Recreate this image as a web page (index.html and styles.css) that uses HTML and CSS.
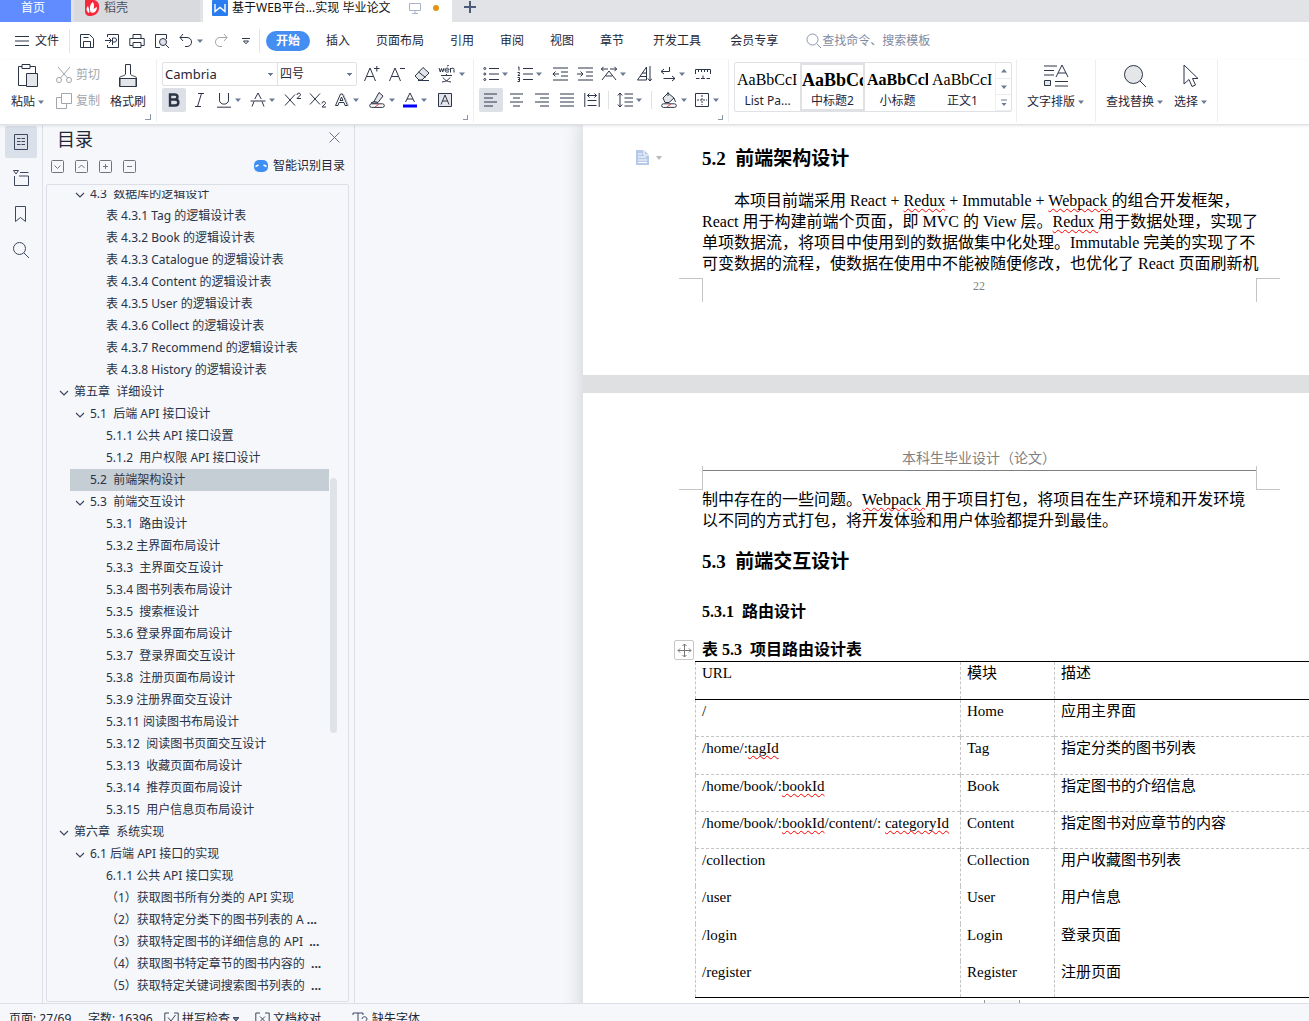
FILE: index.html
```html
<!DOCTYPE html>
<html lang="zh-CN">
<head>
<meta charset="utf-8">
<title>基于WEB平台…实现 毕业论文</title>
<link rel="stylesheet" href="styles.css">
</head>
<body>
<svg class="defs" width="0" height="0" aria-hidden="true">
  <symbol id="caret" viewBox="0 0 6 4"><path d="M0 0.500h6L3 4z" fill="#6b7a96"/></symbol>
  <symbol id="chev" viewBox="0 0 10 6"><path d="M1 1l4 4 4-4" fill="none" stroke="#3c465c" stroke-width="1.200"/></symbol>
</svg>

<header class="tabs">
  <button class="tab home">首页</button>
  <button class="tab docer">
    <svg width="16" height="16" viewBox="0 0 16 16"><path d="M1 0h9a6 6 0 0 1 5 7a8 8 0 0 1-8 9H5a5 5 0 0 1-4-5z" fill="#f5293b"/><path d="M5 13c-3-2-3-5-1-7 1 3 2 5 1 7zM7 13C5 8 6 4 9 2c2 4 1 8-2 11zM8 13c0-3 2-5 5-6 0 3-2 6-5 6z" fill="#fff"/></svg>
    稻壳</button>
  <button class="tab active">
    <svg width="16" height="16" viewBox="0 0 16 16"><rect width="16" height="16" rx="1" fill="#2a7df0"/><path d="M3 4v7.500l5-4 5 4V4" fill="none" stroke="#fff" stroke-width="1.400"/></svg>
    <span class="tab-name">基于WEB平台...实现 毕业论文</span>
    <svg width="12" height="12" viewBox="0 0 12 12" fill="none" stroke="#a9b4c8"><path d="M.5 1.500h11v7H.5zM6 8.500v3M3 11.500h6"/></svg>
    <i class="dot"></i>
  </button>
  <button class="newtab" aria-label="新建"><svg width="12" height="12" viewBox="0 0 12 12"><path d="M6 0v12M0 6h12" stroke="#4a5a78" stroke-width="2"/></svg></button>
</header>

<nav class="menu">
  <button class="file"><svg width="16" height="12" viewBox="0 0 16 12" stroke="#2c3448"><path d="M1 1.500h14M1 6h14M1 10.500h14"/></svg>文件</button>
  <i class="vline"></i>
  <div class="quick">
    <button class="t" aria-label="保存"><svg width="16" height="16" viewBox="0 0 16 16"><path d="M1.500 1.500h9l4 4v9h-13zM4.500 14.500v-6h7v6M4.500 4.500h5"/></svg></button>
    <button class="t" aria-label="输出为PDF"><svg width="16" height="16" viewBox="0 0 16 16"><path d="M3.500 4V1.500h11v13h-11V12M1 7.500h6M5 5l2.500 2.500L5 10M8.500 12V5h2.500c2 0 2 4 0 4H8.500"/></svg></button>
    <button class="t" aria-label="打印"><svg width="16" height="16" viewBox="0 0 16 16"><path d="M4 5.500v-4h8v4M4 12.500H.8v-7h14.400v7H12M4 9.500h8v5H4z"/></svg></button>
    <button class="t" aria-label="打印预览"><svg width="16" height="16" viewBox="0 0 16 16"><path d="M6 14.500H1.500v-13h11V6"/><circle cx="9" cy="9" r="3.500" fill="#dfe2e8"/><path d="M11.500 11.500l3.500 3.500"/></svg></button>
    <button class="t c" aria-label="撤销"><svg width="16" height="16" viewBox="0 0 16 16"><path d="M5 1L2 4.500 5 8M2 4.500h7c6 0 6 9 0 9H7"/></svg><svg class="car"><use href="#caret"/></svg></button>
    <button class="t off" aria-label="恢复"><svg width="16" height="16" viewBox="0 0 16 16"><path d="M11 1l3 3.500L11 8M14 4.500H7c-6 0-6 9 0 9h2"/></svg></button>
    <button class="t" aria-label="更多"><svg width="8" height="8" viewBox="0 0 8 8"><path d="M0 1.500h8M1.500 4h5L4 6.800z"/></svg></button>
  </div>
  <i class="vline"></i>
  <div class="menus">
    <button class="pill">开始</button><button>插入</button><button>页面布局</button><button>引用</button><button>审阅</button><button>视图</button><button>章节</button>
    <div class="menus wide"><button>开发工具</button><button>会员专享</button></div>
  </div>
  <label class="search"><svg width="16" height="16" viewBox="0 0 16 16" fill="none" stroke="#8a97ae"><circle cx="6.500" cy="6.500" r="5.500"/><path d="M10.500 10.500l4.500 4.500"/></svg><input type="text" placeholder="查找命令、搜索模板" aria-label="查找命令、搜索模板"></label>
</nav>

<section class="ribbon">
  <div class="group clip">
    <button class="big"><svg width="24" height="26" viewBox="0 0 24 26"><path d="M6 3.500H2.500v19H10M14 3.500h5.500V10M6 1.500h8v4H6z"/><path d="M10.500 10.500h11v13h-11z" fill="#e4e6ea"/></svg><span>粘贴<svg class="car"><use href="#caret"/></svg></span></button>
    <div class="stack">
      <button class="off"><svg width="16" height="16" viewBox="0 0 16 16"><circle cx="3" cy="13" r="2.500"/><circle cx="13" cy="13" r="2.500"/><path d="M2 0l9.500 11M14 0L4.500 11"/></svg>剪切</button>
      <button class="off"><svg width="16" height="16" viewBox="0 0 16 16"><path d="M5.500.5h10v10h-10zM5.500 4.500h-5v11h10v-5"/></svg>复制</button>
    </div>
    <button class="big"><svg width="24" height="26" viewBox="0 0 24 26"><path d="M4 15.500h16v8H4z" fill="#e4e6ea"/><path d="M3.500 23.500V15c0-2 6-2 6-4V1.500h5V11c0 2 6 2 6 4v8.500z"/></svg><span>格式刷</span></button>
  </div>
  <div class="group font">
    <div class="row">
      <div class="selects"><select class="s1" aria-label="字体"><option>Cambria</option></select><select class="s2" aria-label="字号"><option>四号</option></select></div>
      <button class="t" aria-label="增大字号"><svg width="16" height="16" viewBox="0 0 16 16"><path d="M.5 15L6 2l5.500 13M2.500 10.500h7M10 2.500h5.500M12.800 0v5.500"/></svg></button>
      <button class="t" aria-label="减小字号"><svg width="16" height="16" viewBox="0 0 16 16"><path d="M.5 15L6 2l5.500 13M2.500 10.500h7M11 2.500h5"/></svg></button>
      <button class="t" aria-label="清除格式"><svg width="16" height="16" viewBox="0 0 16 16"><path d="M9 1.500L15 7l-7 7H5L1 10z" fill="#e4e6ea"/><path d="M4.500 6l7 5.500M4 14.500h11"/></svg></button>
      <button class="t c" aria-label="拼音"><svg width="18" height="18" viewBox="0 0 18 18"><path d="M1 3l1.300 4L3.500 3.500 4.700 7 6 3M7 5h4c0-2.500-4-2.500-4 0s2.500 2.500 4 1.500M9 1l2-1M12.500 7.500V3M12.500 4c2-1.500 3.500-1 3.500.5v3M3 10.500h11M8.500 9v1.500M5 12.500c2 3 4 4 8 4.500M12 12.500c-2 3-4 4-8 4.500"/></svg><svg class="car"><use href="#caret"/></svg></button>
    </div>
    <div class="row">
      <button class="t on" aria-label="加粗"><svg width="16" height="16" viewBox="0 0 16 16"><path d="M4 2.500h4.500c4 0 4 5 0 5H4zM4 7.500h5c4.500 0 4.500 6 0 6H4z" stroke-width="2.400"/></svg></button>
      <button class="t" aria-label="倾斜"><svg width="16" height="16" viewBox="0 0 16 16"><path d="M6 1.500h6M3 14.500h6M9.500 1.500l-4 13"/></svg></button>
      <button class="t c" aria-label="下划线"><svg width="16" height="16" viewBox="0 0 16 16"><path d="M3.500 1v7c0 5.500 9 5.500 9 0V1M1 15.200h14" /></svg><svg class="car"><use href="#caret"/></svg></button>
      <button class="t c" aria-label="删除线"><svg width="16" height="16" viewBox="0 0 16 16"><path d="M2 14.500l2-5M14 14.500l-2-5M4.800 7L8 1l3.200 6M.5 9h15"/></svg><svg class="car"><use href="#caret"/></svg></button>
      <button class="t" aria-label="上标"><svg width="18" height="16" viewBox="0 0 18 16"><path d="M1 2.500l10 11M11 2.500l-10 11M13 3c0-3 4-2 3.500 0L13 6.500h4"/></svg></button>
      <button class="t" aria-label="下标"><svg width="18" height="16" viewBox="0 0 18 16"><path d="M1 1.500l10 11M11 1.500l-10 11M13 11.500c0-3 4-2 3.500 0L13 15h4"/></svg></button>
      <button class="t c" aria-label="文字效果"><svg width="16" height="16" viewBox="0 0 16 16"><path d="M1.500 13.500L6.500 2h2l5 11.500H11L10 10.500H5L4 13.500zM6 8.500h3L7.500 5z"/><path d="M9.500 2l5 11.500" stroke="#b9bec8"/></svg><svg class="car"><use href="#caret"/></svg></button>
      <button class="t c" aria-label="突出显示"><svg width="18" height="16" viewBox="0 0 18 16"><path d="M11 .5l4 3.500-5 6.500-4-1z" fill="#e4e6ea"/><path d="M6 9.500L3 11h6.500M3.500 11.800h11a1.800 1.800 0 0 1 0 3.600h-11a1.800 1.800 0 0 1 0-3.600z"/><path d="M7 15l4-3" stroke="#e04040"/></svg><svg class="car"><use href="#caret"/></svg></button>
      <button class="t c" aria-label="字体颜色"><svg width="16" height="16" viewBox="0 0 16 16"><path d="M3.500 10L8 1l4.500 9M5 7h6"/><path d="M1 14h14" stroke="#00f" stroke-width="3"/></svg><svg class="car"><use href="#caret"/></svg></button>
      <button class="t" aria-label="字符底纹"><svg width="16" height="16" viewBox="0 0 16 16"><path d="M1.500 1.500h13v13h-13z" fill="#e4e6ea"/><path d="M4 12.500L8 3l4 9.500M5.500 9h5"/></svg></button>
    </div>
    <i class="launch"></i>
  </div>
  <div class="group para">
    <div class="row">
      <button class="t c" aria-label="项目符号"><svg width="16" height="16" viewBox="0 0 16 16"><path d="M6 2.500h10M6 8h10M6 13.500h10"/><circle cx="1.800" cy="2.500" r="1"/><circle cx="1.800" cy="8" r="1"/><circle cx="1.800" cy="13.500" r="1"/></svg><svg class="car"><use href="#caret"/></svg></button>
      <button class="t c" aria-label="编号"><svg width="16" height="16" viewBox="0 0 16 16"><path d="M6 2.500h10M6 8h10M6 13.500h10M1 1h1v3.500M.5 6.500H2.500v1.200L1 9.500h2M.5 11.500h2v4h-2M1 13.500h1.500"/></svg><svg class="car"><use href="#caret"/></svg></button>
      <button class="t" aria-label="减少缩进"><svg width="16" height="16" viewBox="0 0 16 16"><path d="M1 2h15M9 6h7M9 10h7M1 14h15M.8 8H7M3.500 5.500L1 8l2.500 2.500"/></svg></button>
      <button class="t" aria-label="增加缩进"><svg width="16" height="16" viewBox="0 0 16 16"><path d="M1 2h15M9 6h7M9 10h7M1 14h15M0 8h6M3.500 5.500L6 8l-2.500 2.500"/></svg></button>
      <button class="t c" aria-label="中文版式"><svg width="16" height="16" viewBox="0 0 16 16"><path d="M1 14L8 5l7 9M5 10h6M0 3h7M2.500.8L.5 3l2 2.200M9 3h7M13.500.8l2 2.200-2 2.200"/></svg><svg class="car"><use href="#caret"/></svg></button>
      <button class="t" aria-label="排序"><svg width="16" height="16" viewBox="0 0 16 16"><path d="M10.500 1v13h-9zM10.500 7H6M10.500 10.500H4M14 0v15M11.800 12.500L14 15l2-2.500"/></svg></button>
      <button class="t c" aria-label="显示标记"><svg width="16" height="16" viewBox="0 0 16 16"><path d="M9.500 1v4.500H1.500M4 3L1 5.500 4 8M3.500 12.500H15M12 10l3 2.500-3 2.500"/></svg><svg class="car"><use href="#caret"/></svg></button>
      <button class="t" aria-label="制表位"><svg width="18" height="16" viewBox="0 0 18 16"><path d="M1.500 8V3.500h15V8M4.500 3.500V6M7.500 3.500V6M10.500 3.500V6M13.500 3.500V6M2 12.500h3.500M12.500 12.500H16M7 12.500h4M9 9.500v3"/></svg></button>
    </div>
    <div class="row">
      <button class="t on" aria-label="左对齐"><svg width="16" height="16" viewBox="0 0 16 16"><path d="M1 2h13M1 6h9M1 10h13M1 14h9"/></svg></button>
      <button class="t" aria-label="居中"><svg width="16" height="16" viewBox="0 0 16 16"><path d="M1 2h13M4 6h7M1 10h13M4 14h7"/></svg></button>
      <button class="t" aria-label="右对齐"><svg width="16" height="16" viewBox="0 0 16 16"><path d="M1 2h14M6 6h9M1 10h14M6 14h9"/></svg></button>
      <button class="t" aria-label="两端对齐"><svg width="16" height="16" viewBox="0 0 16 16"><path d="M1 2h14M1 6h14M1 10h14M1 14h14"/></svg></button>
      <button class="t" aria-label="分散对齐"><svg width="16" height="16" viewBox="0 0 16 16"><path d="M.8 1v14M15.200 1v14M3.500 8.500h9M3.500 13.500h9M3.500 3.500h9M5.500 1.500l-2 2 2 2M10.500 1.500l2 2-2 2"/></svg></button>
      <i class="sep"></i>
      <button class="t c" aria-label="行距"><svg width="16" height="16" viewBox="0 0 16 16"><path d="M7.500 2H16M7.500 6H16M7.500 10H16M7.500 14H16M3 1v14M.8 3.500L3 1l2.200 2.500M.8 12.500L3 15l2.200-2.500"/></svg><svg class="car"><use href="#caret"/></svg></button>
      <i class="sep"></i>
      <button class="t c" aria-label="底纹颜色"><svg width="18" height="16" viewBox="0 0 18 16"><path d="M8 1l6 5-5 4.500H5L3 6z" fill="#e4e6ea"/><path d="M8 0v4M14 6l1.500 4M3.500 11.800h11a1.800 1.800 0 0 1 0 3.600h-11a1.800 1.800 0 0 1 0-3.600z"/><path d="M7 15l4-3" stroke="#e04040"/></svg><svg class="car"><use href="#caret"/></svg></button>
      <button class="t c" aria-label="边框"><svg width="16" height="16" viewBox="0 0 16 16"><path d="M1.500 1.500h13v13h-13z"/><path d="M8 3v10M3 8h10" stroke-dasharray="2 1"/></svg><svg class="car"><use href="#caret"/></svg></button>
    </div>
    <i class="launch"></i>
  </div>
  <div class="group gal">
    <div class="gallery">
      <button class="style"><b class="n">AaBbCcI</b><span>List Pa...</span></button>
      <button class="style sel"><b class="h">AaBbCc</b><span>中标题2</span></button>
      <button class="style"><b>AaBbCcl</b><span>小标题</span></button>
      <button class="style"><b class="n">AaBbCcI</b><span>正文1</span></button>
      <div class="spin">
        <button aria-label="上"><svg class="car up"><use href="#caret"/></svg></button>
        <button aria-label="下"><svg class="car"><use href="#caret"/></svg></button>
        <button aria-label="展开"><svg width="6" height="8" viewBox="0 0 6 8"><path d="M0 1h6" stroke="#6b7a96"/><path d="M.5 4h5L3 7z" fill="#6b7a96" stroke="none"/></svg></button>
      </div>
    </div>
  </div>
  <div class="group lay">
    <button class="big"><svg width="26" height="26" viewBox="0 0 26 26"><path d="M1 3h13M1 7.500h10M1 12h10M13 14l6-12 6 12M15 10h8M12 18.500h13M12 23h13"/><path d="M1.500 17.500h6v5h-6z" fill="#e4e6ea"/></svg><span>文字排版<svg class="car"><use href="#caret"/></svg></span></button>
  </div>
  <div class="group find">
    <button class="big"><svg width="26" height="26" viewBox="0 0 26 26"><circle cx="11.500" cy="11.500" r="9" fill="#e4e6ea"/><path d="M18 18l6 6"/></svg><span>查找替换<svg class="car"><use href="#caret"/></svg></span></button>
    <button class="big"><svg width="26" height="26" viewBox="0 0 26 26"><path d="M6 2v19l5-4.500 3 7 3.500-1.500-3-6.500H20z" fill="#fff"/></svg><span>选择<svg class="car"><use href="#caret"/></svg></span></button>
  </div>
</section>

<main>
  <aside class="rail">
    <button class="on" aria-label="目录"><svg width="18" height="18" viewBox="0 0 18 18"><path d="M2.500 1.500h13v15h-13zM5 5.500h3.500M9.500 5.500H13M5 8.500h3.500M9.500 8.500H13M5 11.500h3.500M9.500 11.500H13"/></svg></button>
    <button aria-label="章节"><svg width="18" height="18" viewBox="0 0 18 18"><path d="M2.500 7v9.500h14V7H7M8 3.500h8.500M1.500 1.500h5L4 5z"/></svg></button>
    <button aria-label="书签"><svg width="18" height="18" viewBox="0 0 18 18"><path d="M3.500 1.500h10v15l-5-4-5 4z"/></svg></button>
    <button aria-label="查找"><svg width="18" height="18" viewBox="0 0 18 18"><circle cx="7.500" cy="7.500" r="6"/><path d="M12 12l5 5"/></svg></button>
  </aside>
  <aside class="panel">
    <div class="phead"><h1>目录</h1><button aria-label="关闭"><svg width="11" height="11" viewBox="0 0 11 11" stroke="#6b7487"><path d="M.5.5l10 10M10.500.5l-10 10"/></svg></button></div>
    <div class="ptools">
      <button aria-label="全部展开"><svg width="13" height="13" viewBox="0 0 13 13"><rect x=".5" y=".5" width="12" height="12" rx="1"/><path d="M3.500 5.500l3 3 3-3"/></svg></button>
      <button aria-label="全部收起"><svg width="13" height="13" viewBox="0 0 13 13"><rect x=".5" y=".5" width="12" height="12" rx="1"/><path d="M3.500 8l3-3 3 3"/></svg></button>
      <button aria-label="升级"><svg width="13" height="13" viewBox="0 0 13 13"><rect x=".5" y=".5" width="12" height="12" rx="1"/><path d="M4 6.500h5M6.500 4v5"/></svg></button>
      <button aria-label="降级"><svg width="13" height="13" viewBox="0 0 13 13"><rect x=".5" y=".5" width="12" height="12" rx="1"/><path d="M4 6.500h5"/></svg></button>
      <button class="smart"><svg width="14" height="12" viewBox="0 0 14 12"><rect width="14" height="12" rx="5" fill="#3f8ef5" stroke="none"/><path d="M1.500 6.500l3-1.500M9.500 5l3 1.500" stroke="#fff" stroke-width="1.400"/></svg>智能识别目录</button>
    </div>
    <div class="tree">
      <ul>
        <li class="l2"><svg class="ch"><use href="#chev"/></svg>4.3  数据库的逻辑设计</li>
        <li class="l3">表 4.3.1 Tag 的逻辑设计表</li>
        <li class="l3">表 4.3.2 Book 的逻辑设计表</li>
        <li class="l3">表 4.3.3 Catalogue 的逻辑设计表</li>
        <li class="l3">表 4.3.4 Content 的逻辑设计表</li>
        <li class="l3">表 4.3.5 User 的逻辑设计表</li>
        <li class="l3">表 4.3.6 Collect 的逻辑设计表</li>
        <li class="l3">表 4.3.7 Recommend 的逻辑设计表</li>
        <li class="l3">表 4.3.8 History 的逻辑设计表</li>
        <li class="l1"><svg class="ch"><use href="#chev"/></svg>第五章  详细设计</li>
        <li class="l2"><svg class="ch"><use href="#chev"/></svg>5.1  后端 API 接口设计</li>
        <li class="l3">5.1.1 公共 API 接口设置</li>
        <li class="l3">5.1.2  用户权限 API 接口设计</li>
        <li class="l2 cur">5.2  前端架构设计</li>
        <li class="l2"><svg class="ch"><use href="#chev"/></svg>5.3  前端交互设计</li>
        <li class="l3">5.3.1  路由设计</li>
        <li class="l3">5.3.2 主界面布局设计</li>
        <li class="l3">5.3.3  主界面交互设计</li>
        <li class="l3">5.3.4 图书列表布局设计</li>
        <li class="l3">5.3.5  搜索框设计</li>
        <li class="l3">5.3.6 登录界面布局设计</li>
        <li class="l3">5.3.7  登录界面交互设计</li>
        <li class="l3">5.3.8  注册页面布局设计</li>
        <li class="l3">5.3.9 注册界面交互设计</li>
        <li class="l3">5.3.11 阅读图书布局设计</li>
        <li class="l3">5.3.12  阅读图书页面交互设计</li>
        <li class="l3">5.3.13  收藏页面布局设计</li>
        <li class="l3">5.3.14  推荐页面布局设计</li>
        <li class="l3">5.3.15  用户信息页布局设计</li>
        <li class="l1"><svg class="ch"><use href="#chev"/></svg>第六章  系统实现</li>
        <li class="l2"><svg class="ch"><use href="#chev"/></svg>6.1 后端 API 接口的实现</li>
        <li class="l3">6.1.1 公共 API 接口实现</li>
        <li class="l3">（1）获取图书所有分类的 API 实现</li>
        <li class="l3">（2）获取特定分类下的图书列表的 A <b>...</b></li>
        <li class="l3">（3）获取特定图书的详细信息的 API  <b>...</b></li>
        <li class="l3">（4）获取图书特定章节的图书内容的  <b>...</b></li>
        <li class="l3">（5）获取特定关键词搜索图书列表的  <b>...</b></li>
      </ul>
      <i class="thumb"></i>
    </div>
  </aside>
  <div class="doc">
    <div class="sheets">
    <article class="page first">
      <i class="crop bl"></i><i class="crop br"></i>
      <span class="para-tool"><svg width="13" height="15" viewBox="0 0 13 15"><path d="M0 0h8l5 5v10H0z" fill="#b6c9e8"/><path d="M8 0v5h5M2 4h4M2 7h8M2 10h9M2 12.500h9" stroke="#fff" fill="none"/></svg><svg width="6" height="4" viewBox="0 0 6 4"><path d="M0 0h6L3 4z" fill="#b5b8be"/></svg></span>
      <h2>5.2  前端架构设计</h2>
      <div class="text">
        <p class="ind">本项目前端采用 React + <u>Redux</u> + Immutable + <u>Webpack </u>的组合开发框架，</p>
        <p>React 用于构建前端个页面，即 MVC 的 View 层。<u>Redux </u>用于数据处理，实现了</p>
        <p>单项数据流，将项目中使用到的数据做集中化处理。Immutable 完美的实现了不</p>
        <p>可变数据的流程，使数据在使用中不能被随便修改，也优化了 React 页面刷新机</p>
      </div>
      <div class="pageno">22</div>
    </article>
    <article class="page second">
      <i class="crop tl"></i><i class="crop tr"></i>
      <div class="runhead">本科生毕业设计（论文）</div>
      <div class="text">
        <p>制中存在的一些问题。<u>Webpack </u>用于项目打包，将项目在生产环境和开发环境</p>
        <p>以不同的方式打包，将开发体验和用户体验都提升到最佳。</p>
      </div>
      <h2>5.3  前端交互设计</h2>
      <h3>5.3.1  路由设计</h3>
      <div class="tablebox">
        <button class="move" aria-label="移动表格"><svg width="15" height="15" viewBox="0 0 15 15" fill="none" stroke="#777"><path d="M7.500 1v13M1 7.500h13M5.500 3l2-2 2 2M5.500 12l2 2 2-2M3 5.500l-2 2 2 2M12 5.500l2 2-2 2"/></svg></button>
        <table>
          <caption>表 5.3  项目路由设计表</caption>
          <thead><tr><th class="c1">URL</th><th class="c2">模块</th><th>描述</th></tr></thead>
          <tbody>
            <tr><td>/</td><td>Home</td><td>应用主界面</td></tr>
            <tr><td>/home/:<u>tagId</u></td><td>Tag</td><td>指定分类的图书列表</td></tr>
            <tr><td>/home/book/:<u>bookId</u></td><td>Book</td><td>指定图书的介绍信息</td></tr>
            <tr><td>/home/book/:<u>bookId</u>/content/: <u>categoryId</u></td><td>Content</td><td>指定图书对应章节的内容</td></tr>
            <tr><td>/collection</td><td>Collection</td><td>用户收藏图书列表</td></tr>
            <tr><td>/user</td><td>User</td><td>用户信息</td></tr>
            <tr><td>/login</td><td>Login</td><td>登录页面</td></tr>
            <tr><td>/register</td><td>Register</td><td>注册页面</td></tr>
          </tbody>
        </table>
        <i class="addrow"></i>
      </div>
    </article>
    </div>
  </div>
</main>

<footer class="status">
  <span class="w1">页面: 27/69</span><span class="w2">字数: 16396</span>
  <button class="w3"><svg width="15" height="15" viewBox="0 0 15 15"><path d="M5 1H.8v13.200h13.400V1H10M4 5.500L7 9l4.500-6"/></svg>拼写检查<svg class="car"><use href="#caret"/></svg></button>
  <button class="w4"><svg width="15" height="15" viewBox="0 0 15 15"><path d="M5 1H.8v13.200h13.400V1H10M5 4.500l5 5M10 4.500l-5 5"/></svg>文档校对</button>
  <button class="w5"><svg width="17" height="15" viewBox="0 0 17 15"><path d="M1 3V1h10v2M6 1v13M4 14h4M10 7c0-3 5-3 5 0 0 2-2.500 2-2.500 4M12.500 13v1"/></svg>缺失字体</button>
</footer>
</body>
</html>
```
FILE: styles.css
```css
* { box-sizing: border-box; }
body {
  margin: 0;
  height: 100vh;
  display: flex;
  flex-direction: column;
  overflow: hidden;
  background: #f5f7fa;
  color: #1f2636;
  font: 12px/16px "Noto Sans", "Noto Sans CJK SC", sans-serif;
}
button, input, select { font: inherit; color: inherit; border: 0; padding: 0; margin: 0; background: none; }
button { white-space: nowrap; }
svg { flex: none; }
.defs { position: absolute; }
.car { width: 6px; height: 4px; }
.up { transform: rotate(180deg); }

/* document tabs */
.tabs { flex: none; display: flex; height: 22px; background: #e2e3e7; }
.tab { display: flex; align-items: center; height: 22px; padding-bottom: 7px; }
.home { width: 71px; justify-content: center; padding-right: 5px; background: #618cff; color: #fff; margin-right: 3px; }
.docer { width: 126px; gap: 4px; padding-left: 10px; background: #d9dade; color: #4b5162; margin-right: 3px; }
.active { width: 249px; gap: 4px; padding-left: 9px; background: #fff; color: #111; }
.active .tab-name { margin-right: 15px; }
.dot { width: 6px; height: 6px; margin-left: 8px; border-radius: 3px; background: #e2960f; }
.newtab { display: flex; align-items: center; padding: 0 0 8px 12px; height: 22px; }

/* menu line */
.menu { flex: none; display: flex; align-items: center; height: 38px; background: #fff; }
.menu svg { fill: none; stroke: #2c3448; }
.file { display: flex; align-items: center; gap: 5px; margin: 0 10px 0 14px; }
.vline { width: 1px; height: 24px; background: #e3e5e9; }
.quick { display: flex; margin: 0 1px 0 4px; }
.t { display: flex; align-items: center; justify-content: center; width: 25px; height: 24px; }
.t svg { fill: none; stroke: #2c3448; }
.t.c { width: 34px; justify-content: flex-start; gap: 3px; padding-left: 4px; }
.t .car, .big .car, .spin .car { stroke: none; }
.t.on { background: #dde1e7; border-radius: 2px; width: 24px; margin-right: 1px; }
.off { color: #a2a5ab; }
.off svg, .menu .off svg { stroke: #a2a5ab; }
.menus { display: flex; align-items: center; gap: 26px; margin-left: 6px; }
.pill { width: 44px; height: 20px; margin-right: -10px; border-radius: 10px; background: #448ef1; color: #fff; font-weight: 700; }
.menus .wide { gap: 29px; margin-left: 3px; }
.search { display: flex; align-items: center; margin-left: 28px; }
.menu .search svg { stroke: #8a97ae; }
.search input { width: 140px; outline: 0; }
.search input::placeholder { color: #7d8aa3; opacity: 1; }

/* ribbon */
.ribbon { flex: none; display: flex; height: 65px; background: #fff; border-bottom: 1px solid #dfe1e5; position: relative; z-index: 2; box-shadow: 0 1px 3px #0000001a; }
.ribbon svg { fill: none; stroke: #2c3448; }
.ribbon .off svg { stroke: #a2a5ab; }
.ribbon .car { stroke: none; }
.group { position: relative; display: flex; height: 62px; border-right: 1px solid #eceef1; }
.clip { width: 157px; padding: 3px 0 0 11px; }
.clip::after, .launch { content: ""; position: absolute; right: 5px; bottom: 2px; width: 5px; height: 5px; border: solid #8b95a8; border-width: 0 1px 1px 0; }
.big { display: flex; flex-direction: column; align-items: center; justify-content: space-between; height: 46px; }
.big span { display: flex; align-items: center; gap: 3px; line-height: 14px; }
.stack { display: flex; flex-direction: column; gap: 10px; margin: 4px 10px 0 12px; }
.stack button { display: flex; align-items: center; gap: 4px; }
.font { width: 317px; flex-direction: column; gap: 2px; padding: 2px 0 0 5px; }
.para { width: 255px; flex-direction: column; gap: 2px; padding: 2px 0 0 5px; }
.row { display: flex; height: 24px; }
.selects { display: flex; width: 195px; height: 24px; margin-right: 2px; border: 1px solid #dfe1e5; border-radius: 2px; }
.selects select {
  appearance: none;
  padding: 0 2px;
  background:
    linear-gradient(#6b7a96, #6b7a96) right 4px top 10px / 5px 1px no-repeat,
    linear-gradient(#6b7a96, #6b7a96) right 5px top 11px / 3px 1px no-repeat,
    linear-gradient(#6b7a96, #6b7a96) right 6px top 12px / 1px 1px no-repeat;
}
.selects .s1 { width: 115px; border-right: 1px solid #dfe1e5; font-size: 13px; }
.s2 { flex: 1; }
.sep { width: 1px; margin: 3px 4px; background: #dfe1e5; }
.gal { width: 288px; padding: 2px 0 0 5px; }
.gallery { display: flex; width: 278px; height: 50px; border: 1px solid #dfe1e5; border-radius: 2px; }
.style { width: 65px; display: flex; flex-direction: column; align-items: center; gap: 3px; overflow: hidden; padding: 7px 2px 0; }
.style b { align-self: flex-start; width: 61px; overflow: hidden; text-align: left; font: 700 16px/20px "Liberation Serif", serif; color: #000; }
.style .n { font-weight: 400; }
.style .h { font-size: 18px; }
.sel { border: 2px solid #dfe1e5; padding: 5px 0 0; }
.spin { display: flex; flex-direction: column; width: 16px; border-left: 1px solid #eceef1; }
.spin button { flex: 1; display: flex; align-items: center; justify-content: center; border-bottom: 1px solid #eceef1; }
.lay { width: 79px; padding: 3px 0 0 10px; }
.find { width: 122px; padding: 3px 0 0 10px; gap: 11px; }

/* side rail and outline panel */
main { flex: 1; min-height: 0; display: flex; }
.rail { width: 43px; display: flex; flex-direction: column; gap: 4px; padding: 1px 5px; border-right: 1px solid #dcdfe5; }
.rail button { display: flex; align-items: center; justify-content: center; width: 32px; height: 32px; border-radius: 2px; }
.rail svg, .ptools svg, .status svg { fill: none; stroke: #3d475e; }
.rail .on { background: #dae0ea; }
.panel { width: 312px; display: flex; flex-direction: column; padding: 0 5px 0 3px; border-right: 1px solid #dcdfe5; }
.phead { display: flex; justify-content: space-between; align-items: center; height: 28px; padding: 0 9px 0 11px; }
.phead h1 { margin: 0; font-size: 18px; font-weight: 400; line-height: 28px; }
.ptools { display: flex; align-items: center; gap: 11px; height: 26px; padding: 0 4px 0 5px; margin-bottom: 5px; }
.ptools svg { stroke: #70747c; display: block; }
.smart { display: flex; align-items: center; gap: 5px; margin-left: auto; }
.tree { position: relative; flex: 1; min-height: 0; overflow: hidden; margin-bottom: 1px; padding-top: 5px; border: 1px solid #dcdfe5; border-radius: 2px; }
.tree ul { height: 100%; margin: 0; padding: 0; list-style: none; overflow: hidden; }
.tree li:first-child { margin-top: -7px; }
.tree li { display: flex; align-items: center; height: 22px; white-space: pre; color: #2a3245; }
.ch { width: 10px; height: 6px; margin: 2px 5px 0 0; }
.l1 { padding-left: 12px; }
.l2 { padding-left: 28px; }
.l3 { padding-left: 59px; }
.tree .cur { margin: 0 19px 0 23px; padding-left: 20px; background: #c5cdd5; }
.thumb { position: absolute; right: 11px; top: 293px; width: 7px; height: 255px; border-radius: 4px; background: #dfe2e6; }

/* pages */
.doc { flex: 1; min-width: 0; overflow: hidden; padding-left: 228px; background: #f5f7fa; }
.sheets { width: 792px; display: flex; flex-direction: column; gap: 18px; background: #dfe0e2; box-shadow: 0 0 18px 2px #00000026; }
.page { position: relative; padding: 0 119px; background: #fff; color: #000; font: 16px/21px "Liberation Serif", "Noto Sans CJK SC", serif; }
.first { height: 250px; padding-top: 20px; }
.second { height: 1123px; padding-top: 55px; }
.page h2 { margin: 0; font-size: 19px; line-height: 28px; white-space: pre; }
.page h3 { margin: 25px 0 17px; font-size: 16px; line-height: 21px; white-space: pre; }
.text p { margin: 0; white-space: nowrap; }
.text .ind { padding-left: 32px; }
.page u { text-decoration: underline wavy #f00 1px; text-decoration-skip-ink: none; text-underline-offset: 2px; }
.first .text { margin: 17px 0 2px; }
.pageno { text-align: center; font-size: 12px; color: #808080; }
.runhead { text-align: center; height: 23px; font-size: 14px; line-height: 22px; color: #808080; border-bottom: 1px solid #808080; margin-bottom: 18px; }
.second .text { margin-bottom: 17px; }
.crop { position: absolute; width: 24px; height: 24px; border: 0 solid #c4c4c4; }
.bl { left: 96px; top: 153px; border-width: 1px 1px 0 0; }
.br { left: 673px; top: 153px; border-width: 1px 0 0 1px; }
.tl { left: 96px; top: 73px; border-width: 0 1px 1px 0; }
.tr { left: 673px; top: 73px; border-width: 0 0 1px 1px; }
.para-tool { position: absolute; left: 53px; top: 25px; display: flex; align-items: center; gap: 7px; }
.tablebox { position: relative; margin-left: -7px; width: 700px; }
.move { position: absolute; left: -21px; top: 1px; width: 20px; height: 20px; display: flex; align-items: center; justify-content: center; border: 1px solid #c8c8c8; border-radius: 2px; background: #fff; }
table { width: 100%; table-layout: fixed; border-collapse: collapse; font-size: 15px; line-height: 22px; border-bottom: 1px solid #000; }
caption { padding-left: 7px; text-align: left; font-size: 16px; font-weight: 700; line-height: 22px; white-space: pre; }
.c1 { width: 265px; }
.c2 { width: 94px; }
th, td { height: 37px; padding: 0 0 0 6px; text-align: left; font-weight: 400; vertical-align: top; white-space: nowrap; border-left: 1px dashed #c4c4c4; }
thead tr { border-top: 1px solid #000; border-bottom: 1px solid #000; }
th { height: 38px; }
tbody tr:nth-child(-n+5):not(:first-child) { border-top: 1px dashed #c4c4c4; }
tbody tr:nth-child(4n+2) td { height: 38px; }
.addrow { position: absolute; left: 289px; top: 361px; width: 36px; height: 20px; border: solid #999; border-width: 0 1px; background: #f8f8f8; }

/* status line */
.status { flex: none; display: flex; align-items: flex-start; height: 18px; overflow: hidden; padding: 7px 0 0 9px; border-top: 1px solid #dcdfe5; background: #f5f7fa; position: relative; z-index: 1; }
.status button { display: flex; align-items: center; gap: 3px; }
.w1 { width: 79px; }
.w2 { width: 76px; }
.w3 { width: 91px; }
.w4 { width: 97px; }
```
